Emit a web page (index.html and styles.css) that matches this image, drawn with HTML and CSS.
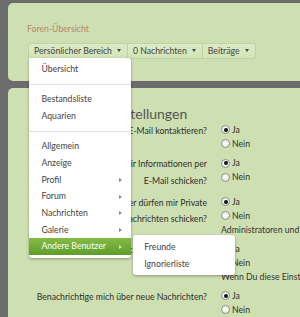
FILE: index.html
```html
<!DOCTYPE html>
<html lang="de">
<head>
<meta charset="utf-8">
<title>Privatsphäre</title>
<link rel="stylesheet" href="styles.css">
</head>
<body>
<div class="page">
  <div class="panel head">
    <div class="crumb">Foren-Übersicht</div>
    <div class="tabs">
      <div class="tab tab-menu">Persönlicher Bereich<span class="caret"></span>
        <ul class="menu">
          <li class="item">Übersicht</li>
          <li class="sep"></li>
          <li class="item">Bestandsliste</li>
          <li class="item">Aquarien</li>
          <li class="sep"></li>
          <li class="item">Allgemein</li>
          <li class="item">Anzeige</li>
          <li class="item sub">Profil<span class="arrow"></span></li>
          <li class="item sub">Forum<span class="arrow"></span></li>
          <li class="item sub">Nachrichten<span class="arrow"></span></li>
          <li class="item sub">Galerie<span class="arrow"></span></li>
          <li class="item sub active">Andere Benutzer<span class="arrow"></span>
            <ul class="submenu">
              <li class="item">Freunde</li>
              <li class="item">Ignorierliste</li>
            </ul>
          </li>
        </ul>
      </div>
      <div class="tab">0 Nachrichten<span class="caret"></span></div>
      <div class="tab">Beiträge<span class="caret"></span></div>
    </div>
  </div>
  <div class="panel main">
    <h2 class="title"><span class="tight">Privatsphäre-Eins</span>tellungen</h2>
    <div class="row">
      <div class="label">Wer darf mich per <span class="nw">E-Mail</span> kontaktieren?</div>
      <div class="ctrl">
        <div class="opt"><span class="radio on"></span>Ja</div>
        <div class="opt"><span class="radio"></span>Nein</div>
      </div>
    </div>
    <div class="row">
      <div class="label">Darf der Betreiber mir Informationen per <span class="nw">E-Mail</span> schicken?</div>
      <div class="ctrl">
        <div class="opt"><span class="radio on"></span>Ja</div>
        <div class="opt"><span class="radio"></span>Nein</div>
      </div>
    </div>
    <div class="row">
      <div class="label">Welche Benutzer dürfen mir Private Nachrichten schicken?</div>
      <div class="ctrl">
        <div class="opt"><span class="radio on"></span>Ja</div>
        <div class="opt"><span class="radio"></span>Nein</div>
        <div class="note">Administratoren und Moderatoren können Dir immer schreiben.</div>
      </div>
    </div>
    <div class="row">
      <div class="label">Benachrichtigung per <span class="nw">E-Mail?</span></div>
      <div class="ctrl">
        <div class="opt"><span class="radio on"></span>Ja</div>
        <div class="opt"><span class="radio"></span>Nein</div>
        <div class="note">Wenn Du diese Einstellung aktivierst, erhältst Du eine E-Mail.</div>
      </div>
    </div>
    <div class="row">
      <div class="label">Benachrichtige mich über neue Nachrichten?</div>
      <div class="ctrl">
        <div class="opt"><span class="radio on"></span>Ja</div>
        <div class="opt"><span class="radio"></span>Nein</div>
      </div>
    </div>
  </div>
</div>
</body>
</html>
```
FILE: styles.css
```css
html, body {
  margin: 0;
  padding: 0;
  overflow: hidden;
}
body {
  background: #6c6c6c;
  font-family: Lato, "Open Sans", sans-serif;
  font-size: 8.7px;
  color: #333;
}
.page {
  padding: 3px 0 0 8px;
  width: 300px;
  height: 317px;
  box-sizing: border-box;
  overflow: hidden;
}
.panel {
  background: #cee0b1;
  border-radius: 5px 0 0 5px;
  width: 310px;
}
.head {
  height: 78px;
  padding: 19px 0 0 19px;
  box-sizing: border-box;
}
.crumb {
  color: #b7876a;
  font-size: 8.7px;
  line-height: 14px;
}
.tabs {
  display: flex;
  margin-top: 7px;
  margin-left: 1px;
}
.tab {
  display: flex;
  align-items: center;
  height: 15.5px;
  padding: 0 6px 0 5px;
  background: linear-gradient(#dcebc6, #d2e4b7);
  border: 1px solid #bed49f;
  border-left-width: 0;
  color: #444;
  white-space: nowrap;
  box-sizing: border-box;
}
.tab:first-child {
  border-left-width: 1px;
  border-radius: 3px 0 0 3px;
}
.tab:last-child {
  border-radius: 0 3px 3px 0;
}
.tab-menu {
  position: relative;
}
.caret {
  width: 0;
  height: 0;
  border-left: 2.5px solid transparent;
  border-right: 2.5px solid transparent;
  border-top: 3px solid #444;
  margin-left: 5px;
}
ul {
  list-style: none;
  margin: 0;
  padding: 0;
}
.menu {
  position: absolute;
  left: 0;
  top: 100%;
  margin-top: 0.5px;
  width: 102px;
  background: #fff;
  border-radius: 0 3px 3px 3px;
  box-shadow: 0 1px 3px rgba(0, 0, 0, 0.35);
  padding: 3.4px 0 3px;
  z-index: 10;
}
.item {
  position: relative;
  line-height: 16.7px;
  padding-left: 12.4px;
  color: #444;
}
.sep {
  height: 1px;
  background: #e3e3e3;
  margin: 6px 0 6.3px;
}
.arrow {
  position: absolute;
  right: 9px;
  top: 6.3px;
  width: 0;
  height: 0;
  border-top: 2.5px solid transparent;
  border-bottom: 2.5px solid transparent;
  border-left: 3px solid #888;
}
.item.active {
  background: linear-gradient(#84bb45, #5f9d2b);
  color: #fff;
}
.item.active .arrow {
  border-left-color: #cfe6b3;
}
.submenu {
  position: absolute;
  left: calc(100% + 2px);
  top: -3px;
  width: 102px;
  background: #fff;
  border-radius: 3px;
  box-shadow: 0 1px 3px rgba(0, 0, 0, 0.35);
  padding: 2.8px 0 3.2px;
}
.submenu .item {
  line-height: 17px;
  padding-left: 11.3px;
  color: #444;
}
.main {
  margin-top: 7px;
  height: 240px;
  padding: 16.7px 0 0 19px;
  box-sizing: border-box;
}
.title {
  margin: 0 0 0 3px;
  font-size: 14px;
  line-height: 18px;
  font-weight: normal;
  color: #555;
  white-space: nowrap;
}
.tight {
  letter-spacing: -0.4px;
}
.row {
  display: grid;
  grid-template-columns: 180px 1fr;
  column-gap: 14px;
  margin-bottom: 5.5px;
}
.label {
  text-align: right;
  line-height: 16.6px;
  color: #2e2e2e;
}
.nw {
  white-space: nowrap;
}
.ctrl {
  line-height: 14px;
  white-space: nowrap;
  color: #2e2e2e;
}
.opt {
  display: flex;
  align-items: center;
}
.radio {
  width: 9px;
  height: 9px;
  box-sizing: border-box;
  border-radius: 50%;
  border: 1px solid #8d8d8d;
  background: radial-gradient(circle at 50% 35%, #fff, #e6e6e6);
  margin-right: 2px;
  position: relative;
}
.radio.on::after {
  content: "";
  position: absolute;
  left: 1.5px;
  top: 1.5px;
  width: 4px;
  height: 4px;
  border-radius: 50%;
  background: #111;
}
.note {
  line-height: 13.5px;
  color: #333;
  overflow: hidden;
}
```
